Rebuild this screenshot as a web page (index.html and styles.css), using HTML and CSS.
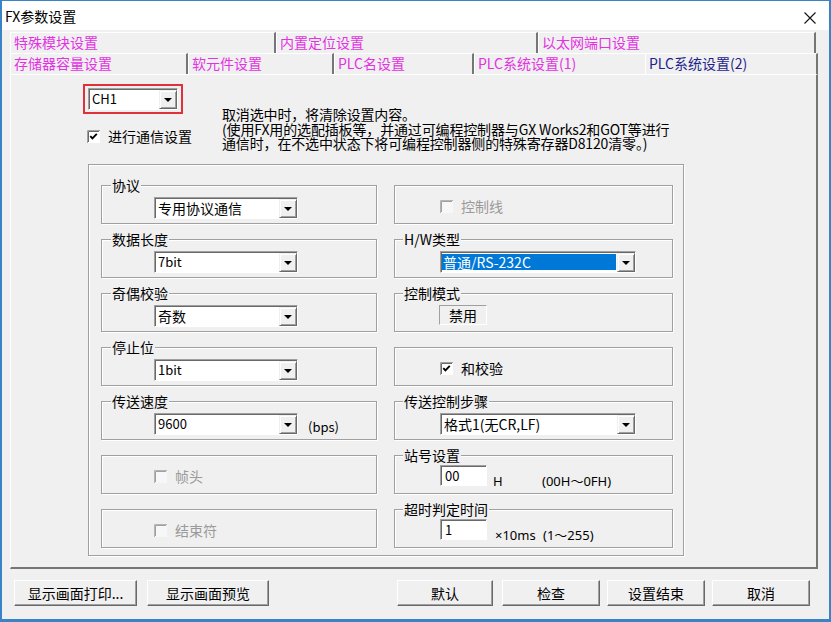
FILE: index.html
```html
<!DOCTYPE html>
<html lang="zh-CN">
<head>
<meta charset="utf-8">
<title>FX参数设置</title>
<link rel="stylesheet" href="styles.css">
</head>
<body>
<div class="window">
  <div class="titlebar">
    <span class="title">FX参数设置</span>
    <span class="close"><svg width="12" height="12" viewBox="0 0 12 12"><path d="M0.5 0.5L11.5 11.5M11.5 0.5L0.5 11.5" stroke="#111" stroke-width="1.1" fill="none"/></svg></span>
  </div>

  <div class="tabs">
    <div class="tabrow">
      <div class="tab t-a">特殊模块设置</div>
      <div class="tab t-b">内置定位设置</div>
      <div class="tab t-c">以太网端口设置</div>
    </div>
    <div class="tabrow">
      <div class="tab t-d">存储器容量设置</div>
      <div class="tab t-e">软元件设置</div>
      <div class="tab t-f">PLC名设置</div>
      <div class="tab t-g">PLC系统设置(1)</div>
      <div class="tab t-sel">PLC系统设置(2)</div>
    </div>
  </div>

  <div class="panel">
    <div class="top">
      <div class="top-left">
        <div class="ch-wrap">
          <div class="combo c-ch"><span class="val latin">CH1</span><span class="drop"><i class="arrow"></i></span></div>
        </div>
        <div class="chk main-chk">
          <svg class="cb" width="13" height="13" viewBox="0 0 13 13"><rect width="13" height="13" fill="#fff"/><path d="M0.5 13V0.5H13" fill="none" stroke="#a0a0a0"/><path d="M1.5 12V1.5H12" fill="none" stroke="#696969"/><path d="M3.3 6.2L5.4 8.4L9.8 3.8" fill="none" stroke="#000" stroke-width="1.9"/></svg>
          <span>进行通信设置</span>
        </div>
      </div>
      <div class="desc">
        <p>取消选中时，将清除设置内容。</p>
        <p>(使用FX用的选配插板等，并通过可编程控制器与GX Works2和GOT等进行</p>
        <p>通信时，在不选中状态下将可编程控制器侧的特殊寄存器D8120清零。)</p>
      </div>
    </div>

    <div class="big">
      <div class="col col-left">
        <div class="group">
          <div class="legend">协议</div>
          <div class="combo c-l"><span class="val">专用协议通信</span><span class="drop"><i class="arrow"></i></span></div>
        </div>
        <div class="group">
          <div class="legend">数据长度</div>
          <div class="combo c-l"><span class="val latin">7bit</span><span class="drop"><i class="arrow"></i></span></div>
        </div>
        <div class="group">
          <div class="legend">奇偶校验</div>
          <div class="combo c-l"><span class="val">奇数</span><span class="drop"><i class="arrow"></i></span></div>
        </div>
        <div class="group">
          <div class="legend">停止位</div>
          <div class="combo c-l"><span class="val latin">1bit</span><span class="drop"><i class="arrow"></i></span></div>
        </div>
        <div class="group">
          <div class="legend">传送速度</div>
          <div class="row">
            <div class="combo c-l"><span class="val latin">9600</span><span class="drop"><i class="arrow"></i></span></div>
            <span class="bps">(bps)</span>
          </div>
        </div>
        <div class="group">
          <div class="chk dis">
            <svg class="cb" width="13" height="13" viewBox="0 0 13 13"><rect width="13" height="13" fill="#f7f7f7"/><path d="M0.5 13V0.5H13" fill="none" stroke="#b4b4b4"/><path d="M1.5 12V1.5H12" fill="none" stroke="#a0a0a0"/></svg>
            <span>帧头</span>
          </div>
        </div>
        <div class="group">
          <div class="chk dis">
            <svg class="cb" width="13" height="13" viewBox="0 0 13 13"><rect width="13" height="13" fill="#f7f7f7"/><path d="M0.5 13V0.5H13" fill="none" stroke="#b4b4b4"/><path d="M1.5 12V1.5H12" fill="none" stroke="#a0a0a0"/></svg>
            <span>结束符</span>
          </div>
        </div>
      </div>

      <div class="col col-right">
        <div class="group">
          <div class="chk dis">
            <svg class="cb" width="13" height="13" viewBox="0 0 13 13"><rect width="13" height="13" fill="#f7f7f7"/><path d="M0.5 13V0.5H13" fill="none" stroke="#b4b4b4"/><path d="M1.5 12V1.5H12" fill="none" stroke="#a0a0a0"/></svg>
            <span>控制线</span>
          </div>
        </div>
        <div class="group">
          <div class="legend">H/W类型</div>
          <div class="combo c-r"><span class="val sel">普通/RS-232C</span><span class="drop"><i class="arrow"></i></span></div>
        </div>
        <div class="group">
          <div class="legend">控制模式</div>
          <div class="static">禁用</div>
        </div>
        <div class="group">
          <div class="chk">
            <svg class="cb" width="13" height="13" viewBox="0 0 13 13"><rect width="13" height="13" fill="#fff"/><path d="M0.5 13V0.5H13" fill="none" stroke="#a0a0a0"/><path d="M1.5 12V1.5H12" fill="none" stroke="#696969"/><path d="M3.3 6.2L5.4 8.4L9.8 3.8" fill="none" stroke="#000" stroke-width="1.9"/></svg>
            <span>和校验</span>
          </div>
        </div>
        <div class="group">
          <div class="legend">传送控制步骤</div>
          <div class="combo c-r"><span class="val">格式1(无CR,LF)</span><span class="drop"><i class="arrow"></i></span></div>
        </div>
        <div class="group">
          <div class="legend">站号设置</div>
          <div class="row edit-row">
            <div class="edit">00</div>
            <span class="unit u-h">H</span>
            <span class="unit">(00H～0FH)</span>
          </div>
        </div>
        <div class="group">
          <div class="legend">超时判定时间</div>
          <div class="row edit-row">
            <div class="edit">1</div>
            <span class="unit u-ms">×10ms</span>
            <span class="unit">(1～255)</span>
          </div>
        </div>
      </div>
    </div>
  </div>

  <div class="btnrow">
    <div class="btn b-print">显示画面打印...</div>
    <div class="btn b-preview">显示画面预览</div>
    <div class="btn b-default">默认</div>
    <div class="btn b-check">检查</div>
    <div class="btn b-done">设置结束</div>
    <div class="btn b-cancel">取消</div>
  </div>
</div>
</body>
</html>
```
FILE: styles.css
```css
* { box-sizing: border-box; }
html, body { margin: 0; padding: 0; }
body {
  width: 831px;
  height: 622px;
  overflow: hidden;
  background: #f0f0f0;
  font-family: "Noto Sans CJK SC", "Microsoft YaHei", sans-serif;
  font-size: 14px;
  color: #000;
}
.window {
  width: 831px;
  height: 622px;
  border-style: solid;
  border-color: #3a84c6;
  border-width: 1px 2px 3px 2px;
  background: #f0f0f0;
}

/* title bar */
.titlebar {
  height: 29px;
  background: #fff;
  display: flex;
  align-items: center;
  padding-left: 3px;
}
.title { font-size: 14px; line-height: 18px; }
.close {
  margin-left: auto;
  margin-right: 13px;
  margin-top: 4px;
  width: 12px;
  height: 12px;
  display: flex;
}

/* tabs */
.tabs { margin: 2px 0 0 8px; }
.tabrow { display: flex; height: 21px; }
.tab {
  height: 21px;
  border-left: 1px solid #fff;
  border-top: 1px solid #fff;
  border-right: 2px solid #767676;
  padding-left: 3px;
  line-height: 19px;
  color: #e331e3;
  white-space: nowrap;
  font-size: 14px;
}
.t-a { width: 266px; }
.t-b { width: 262px; }
.t-c { width: 278px; }
.t-d { width: 178px; }
.t-e { width: 146px; }
.t-f { width: 140px; }
.t-g { width: 171px; border-right: none; }
.t-sel { width: 173px; color: #1e1e8c; }

/* panel */
.panel {
  margin-left: 8px;
  width: 808px;
  height: 495px;
  border-left: 1px solid #fff;
  border-top: 1px solid #fff;
  border-right: 2px solid #767676;
  border-bottom: 2px solid #767676;
}
.top {
  display: flex;
  height: 80px;
  margin-top: 9px;
  padding-left: 72px;
}
.top-left { width: 139px; flex: none; }
.ch-wrap {
  width: 100px;
  height: 30px;
  border: 2px solid #e0303a;
  padding: 2px 3px;
}
.main-chk { margin-top: 14px; margin-left: 4px; }
.desc { margin-top: 23px; }
.desc p {
  margin: 0;
  white-space: nowrap;
  line-height: 14.5px;
  font-size: 14px;
  letter-spacing: -0.15px;
}

/* big group */
.big {
  margin-left: 77px;
  width: 596px;
  height: 392px;
  border: 1px solid #a0a0a0;
  box-shadow: inset 1px 1px 0 #fff, 1px 1px 0 #fff;
  display: grid;
  grid-template-columns: 276px 279px;
  column-gap: 17px;
  padding: 20px 0 0 12px;
  align-items: start;
}
.col { display: flex; flex-direction: column; gap: 15px; }
.group {
  height: 39px;
  border: 1px solid #a0a0a0;
  box-shadow: inset 1px 1px 0 #fff, 1px 1px 0 #fff;
}
.legend {
  margin: -10px 0 0 9px;
  padding: 0 1px;
  width: max-content;
  height: 18px;
  line-height: 18px;
  background: #f0f0f0;
  white-space: nowrap;
}
.col-right .legend { margin-left: 8px; }

/* combos */
.combo {
  display: flex;
  height: 22px;
  background: #fff;
  border-top: 1px solid #a0a0a0;
  border-left: 1px solid #a0a0a0;
  border-right: 1px solid #fff;
  border-bottom: 1px solid #fff;
  box-shadow: inset 1px 1px 0 #696969;
}
.group .combo { margin-top: 3px; }
.col-left .combo, .col-left .row { margin-left: 52px; }
.col-left .row .combo { margin-left: 0; }
.col-right .combo, .col-right .chk, .col-right .row { margin-left: 45px; }
.c-ch { width: 90px; }
.c-l { width: 144px; }
.c-r { width: 196px; }
.val {
  flex: 1;
  padding-left: 3px;
  line-height: 20px;
  white-space: nowrap;
  font-size: 14px;
}
.val.latin { font-size: 13px; }
.val.sel {
  background: #0078d7;
  color: #fff;
  margin: 2px 1px 2px 1px;
  padding-left: 1px;
  line-height: 16px;
}
.drop {
  flex: none;
  width: 18px;
  margin: 1px 0 0 0;
  background: #f0f0f0;
  border-top: 1px solid #f0f0f0;
  border-left: 1px solid #f0f0f0;
  border-right: 1px solid #696969;
  border-bottom: 1px solid #696969;
  box-shadow: inset 1px 1px 0 #fff, inset -1px -1px 0 #a0a0a0;
  display: flex;
  align-items: center;
  justify-content: center;
}
.arrow {
  display: block;
  width: 0;
  height: 0;
  border-left: 4px solid transparent;
  border-right: 4px solid transparent;
  border-top: 4px solid #000;
  margin-top: 1px;
}

/* rows */
.row { display: flex; align-items: flex-start; }
.group .row .combo { margin-top: 3px; }
.bps { margin: 9px 0 0 10px; font-size: 13px; line-height: 16px; }

/* checkboxes */
.chk {
  display: flex;
  align-items: center;
  height: 16px;
  white-space: nowrap;
}
.group .chk { margin-top: 12px; }
.col-left .chk { margin-left: 52px; }
.cb { flex: none; margin-right: 8px; display: block; }
.chk.dis span { color: #9a9a9a; }

/* static */
.static {
  margin: 3px 0 0 44px;
  width: 48px;
  height: 20px;
  border-top: 1px solid #a0a0a0;
  border-left: 1px solid #a0a0a0;
  border-right: 1px solid #fff;
  border-bottom: 1px solid #fff;
  text-align: center;
  line-height: 18px;
}

/* edits */
.edit-row { margin-top: 1px; }
.edit {
  width: 47px;
  height: 21px;
  background: #fff;
  border-top: 1px solid #a0a0a0;
  border-left: 1px solid #a0a0a0;
  border-right: 1px solid #fff;
  border-bottom: 1px solid #fff;
  box-shadow: inset 1px 1px 0 #696969;
  padding-left: 4px;
  line-height: 19px;
  font-size: 13px;
}
.unit {
  margin-top: 8px;
  font-family: "Noto Sans", "Noto Sans CJK SC", sans-serif;
  font-size: 13px;
  line-height: 16px;
  white-space: nowrap;
}
.u-h { width: 49px; margin-left: 6px; }
.u-ms { width: 48px; margin-left: 8px; }

/* buttons */
.btnrow {
  display: flex;
  height: 26px;
  margin-top: 11px;
  padding-left: 12px;
}
.btn {
  height: 26px;
  background: #f0f0f0;
  border-top: 1px solid #fff;
  border-left: 1px solid #fff;
  border-right: 1px solid #696969;
  border-bottom: 1px solid #696969;
  box-shadow: inset -1px -1px 0 #a0a0a0;
  display: flex;
  align-items: center;
  justify-content: center;
  font-size: 14px;
  white-space: nowrap;
}
.b-print { width: 123px; }
.b-preview { width: 122px; margin-left: 10px; }
.b-default { width: 96px; margin-left: 128px; }
.b-check { width: 98px; margin-left: 9px; }
.b-done { width: 98px; margin-left: 7px; }
.b-cancel { width: 98px; margin-left: 7px; }
```
